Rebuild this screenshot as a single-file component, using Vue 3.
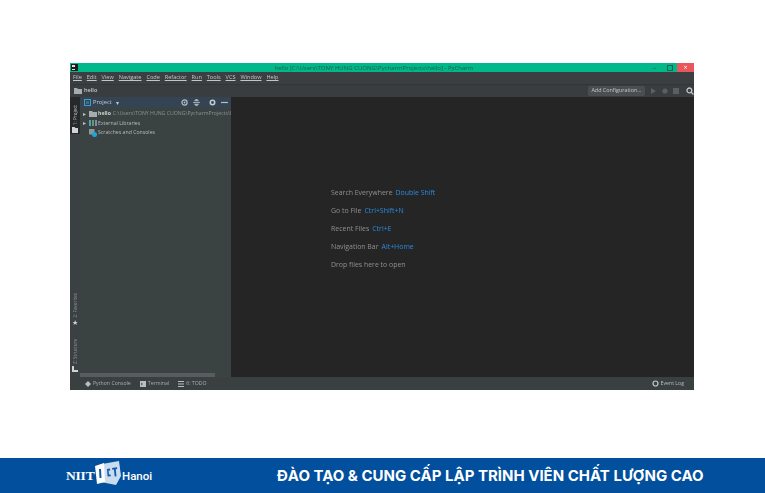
<script setup>
const menus = ['File','Edit','View','Navigate','Code','Refactor','Run','Tools','VCS','Window','Help']
const hints = [
  { label: 'Search Everywhere', key: 'Double Shift' },
  { label: 'Go to File', key: 'Ctrl+Shift+N' },
  { label: 'Recent Files', key: 'Ctrl+E' },
  { label: 'Navigation Bar', key: 'Alt+Home' },
  { label: 'Drop files here to open', key: '' },
]
</script>

<template>
  <div class="page">
    <div class="window">
      <div class="titlebar">
        <svg class="app-ico" width="7" height="7" viewBox="0 0 7 7"><rect width="7" height="7" fill="#1c1c1c"/><rect x="1" y="1" width="3" height="2" fill="#ddd"/><rect x="1" y="5" width="3" height="1" fill="#ddd"/></svg>
        <span class="title">hello [C:\Users\TONY HUNG CUONG\PycharmProjects\hello] - PyCharm</span>
        <div class="winbtns">
          <span class="wb">–</span>
          <span class="wb"><svg width="6" height="6" viewBox="0 0 6 6"><rect x="0.5" y="0.5" width="5" height="5" fill="none" stroke="#2c5a50"/></svg></span>
          <span class="wb close">×</span>
        </div>
      </div>
      <div class="menubar">
        <span v-for="m in menus" :key="m" class="menu">{{ m }}</span>
      </div>
      <div class="navbar">
        <svg width="8" height="6" viewBox="0 0 8 6"><path d="M0 0h3l1 1h4v5H0z" fill="#a4acb2"/></svg>
        <span class="crumb">hello</span>
        <div class="spacer"></div>
        <span class="config">Add Configuration...</span>
        <svg class="tool" width="6" height="6" viewBox="0 0 6 6"><path d="M1 0l5 3-5 3z" fill="#5a5f60"/></svg>
        <svg class="tool" width="6" height="6" viewBox="0 0 6 6"><circle cx="3" cy="3" r="2.6" fill="#5a5f60"/></svg>
        <svg class="tool" width="6" height="6" viewBox="0 0 6 6"><rect width="6" height="6" fill="#5a5f60"/></svg>
        <svg class="search" width="8" height="8" viewBox="0 0 8 8"><circle cx="3.4" cy="3.4" r="2.4" fill="none" stroke="#c4c8ca" stroke-width="1.3"/><path d="M5 5l2.500 2.500" stroke="#c4c8ca" stroke-width="1.3"/></svg>
      </div>
      <div class="main">
        <div class="rail">
          <div class="rail-top">
            <div class="railtab active">
              <span class="vert">1: Project</span>
              <svg width="6" height="6" viewBox="0 0 6 6"><path d="M0 0h2.500l1 1H6v5H0z" fill="#cfd3d5"/></svg>
            </div>
          </div>
          <div class="rail-bottom">
            <div class="railtab">
              <span class="vert dim">2: Favorites</span>
              <span class="star">★</span>
            </div>
            <div class="railtab">
              <span class="vert dim">Z: Structure</span>
              <svg width="6" height="6" viewBox="0 0 6 6"><path d="M0 0h2v4h4v2H0z" fill="#cfd3d5"/></svg>
            </div>
          </div>
        </div>
        <div class="project">
          <div class="phead">
            <svg width="7" height="7" viewBox="0 0 7 7"><rect x="0.5" y="0.5" width="6" height="6" fill="none" stroke="#3aa0c8"/><rect x="2" y="2" width="3" height="3" fill="#2f6f90"/></svg>
            <span class="ptitle">Project</span>
            <span class="caret">▾</span>
            <div class="spacer"></div>
            <svg width="7" height="7" viewBox="0 0 7 7"><circle cx="3.5" cy="3.5" r="2.6" fill="none" stroke="#b5bcc2" stroke-width="1.2"/><circle cx="3.5" cy="3.5" r="0.9" fill="#b5bcc2"/></svg>
            <svg class="ml" width="7" height="7" viewBox="0 0 7 7"><path d="M0 3.500h7M3.500 0l-2 1.800h4zM3.500 7l-2-1.800h4z" stroke="#b5bcc2" stroke-width=".8" fill="#b5bcc2"/></svg>
            <svg class="ml2" width="7" height="7" viewBox="0 0 7 7"><circle cx="3.5" cy="3.5" r="2.2" fill="none" stroke="#c4c9cd" stroke-width="1.6"/></svg>
            <svg class="ml" width="7" height="7" viewBox="0 0 7 7"><path d="M0 3.500h7" stroke="#b5bcc2" stroke-width="1.2"/></svg>
          </div>
          <div class="tree">
            <div class="row">
              <span class="arrow">▸</span>
              <svg width="8" height="6" viewBox="0 0 8 6"><path d="M0 0h3l1 1h4v5H0z" fill="#a4acb2"/></svg>
              <span class="bold">hello</span>
              <span class="path">C:\Users\TONY HUNG CUONG\PycharmProjects\hello</span>
            </div>
            <div class="row">
              <span class="arrow">▸</span>
              <svg width="8" height="6" viewBox="0 0 8 6"><rect width="2" height="6" fill="#4f9fc0"/><rect x="3" width="2" height="6" fill="#5aa06a"/><rect x="6" width="2" height="6" fill="#8d7fb5"/></svg>
              <span class="item">External Libraries</span>
            </div>
            <div class="row sub">
              <svg width="8" height="8" viewBox="0 0 8 8"><rect width="5.500" height="5.500" fill="#8d969b"/><circle cx="5.500" cy="5.500" r="2.500" fill="#19a7d8"/></svg>
              <span class="item">Scratches and Consoles</span>
            </div>
          </div>
          <div class="spacer"></div>
          <div class="scroll"></div>
        </div>
        <div class="editor">
          <div v-for="h in hints" :key="h.label" class="hint">
            <span class="hlabel">{{ h.label }}</span>
            <span v-if="h.key" class="hkey">{{ h.key }}</span>
          </div>
        </div>
      </div>
      <div class="status">
        <span class="sitem first"><svg width="6" height="6" viewBox="0 0 6 6"><path d="M3 0l3 3-3 3-3-3z" fill="#b8bec2"/></svg>Python Console</span>
        <span class="sitem"><svg width="6" height="6" viewBox="0 0 6 6"><rect width="6" height="6" fill="#b8bec2"/><path d="M1 2l1.500 1L1 4" stroke="#333" fill="none" stroke-width=".7"/></svg>Terminal</span>
        <span class="sitem"><svg width="6" height="6" viewBox="0 0 6 6"><path d="M0 .5h6M0 3h6M0 5.500h6" stroke="#b8bec2"/></svg>6: TODO</span>
        <div class="spacer"></div>
        <span class="sitem log"><svg width="7" height="7" viewBox="0 0 7 7"><circle cx="3.5" cy="3.5" r="2.5" fill="none" stroke="#c4c9cd" stroke-width="1.2"/></svg>Event Log</span>
      </div>
    </div>
    <div class="footer">
      <div class="logo">
        <span class="niit">NIIT</span>
        <svg class="ict" width="26" height="25" viewBox="0 0 26 25">
          <path d="M7 3L24 0l2 15-5 9-15-3z" fill="#c9dcf0"/>
          <path d="M0 5l9-3 1 19-8 2z" fill="#fff"/>
          <path d="M4 8h2l.5 9h-2z" fill="#0f5aa6"/>
          <path d="M12 8l3-.4.2 1.800-1.600.2.4 4 1.600-.2.200 1.800-3.200.4z" fill="#0f5aa6"/>
          <path d="M17 7l5-.7.200 1.800-1.500.2.800 7-1.800.3-.8-7-1.500.2z" fill="#0f5aa6"/>
        </svg>
        <span class="hanoi">Hanoi</span>
      </div>
      <span class="slogan">ĐÀO TẠO &amp; CUNG CẤP LẬP TRÌNH VIÊN CHẤT LƯỢNG CAO</span>
    </div>
  </div>
</template>

<style scoped>
.page {
  width: 765px;
  height: 493px;
  background: #fff;
  overflow: hidden;
  display: flex;
  flex-direction: column;
  font-family: "Open Sans", "Noto Sans", sans-serif;
}
.spacer { flex: 1; }
.window {
  margin: 63px 0 0 70px;
  width: 624px;
  height: 327px;
  display: flex;
  flex-direction: column;
  background: #3c3f41;
  color: #b6babc;
  font-size: 5.6px;
  line-height: 1;
  filter: blur(.3px);
}
.titlebar {
  height: 9px;
  background: #00b98a;
  display: flex;
  align-items: center;
  position: relative;
  color: #1d5a4a;
}
.app-ico { margin-left: 1px; }
.title {
  position: absolute;
  left: 0;
  right: 16px;
  text-align: center;
  font-size: 6px;
}
.winbtns { margin-left: auto; display: flex; height: 100%; position: relative; }
.wb { width: 15px; display: flex; align-items: center; justify-content: center; color: #2c5a50; font-size: 7px; }
.wb.close { background: #e8575a; color: #fff; width: 17px; }
.menubar {
  height: 12px;
  background: #3c3f41;
  display: flex;
  align-items: center;
  gap: 4.9px;
  padding-left: 3px;
  color: #c2c6c8;
}
.menu { text-decoration: underline; text-decoration-thickness: .5px; }
.navbar {
  height: 13px;
  background: #3a3d3e;
  border-top: 1px solid #333637;
  box-sizing: border-box;
  display: flex;
  align-items: center;
  padding-left: 4px;
  gap: 2px;
  color: #c4c8ca;
}
.crumb { font-weight: 600; }
.config {
  background: #4a4e50;
  border-radius: 2px;
  padding: 2.5px 3px;
  color: #c4c8ca;
  font-size: 5.4px;
}
.tool { margin-left: 3.5px; }
.search { margin-left: 5px; }
.main {
  flex: 1;
  display: flex;
  min-height: 0;
  background: #252526;
}
.rail {
  width: 10px;
  background: #3b4042;
  display: flex;
  flex-direction: column;
  justify-content: space-between;
  flex: none;
}
.rail-top .railtab.active { background: #26282a; height: 36px; }
.rail-bottom { display: flex; flex-direction: column; gap: 12px; padding-bottom: 4px; }
.railtab {
  display: flex;
  flex-direction: column;
  align-items: center;
  justify-content: flex-end;
  gap: 2px;
  padding-bottom: 1px;
}
.vert {
  writing-mode: vertical-rl;
  transform: rotate(180deg);
  font-size: 4.6px;
  color: #c6cacc;
}
.vert.dim { color: #8f9597; }
.star { color: #cfd3d5; font-size: 7px; }
.project {
  width: 151px;
  flex: none;
  background: #3a4342;
  display: flex;
  flex-direction: column;
  overflow: hidden;
}
.phead {
  height: 11px;
  background: #344453;
  display: flex;
  align-items: center;
  padding: 0 3px 0 4px;
  color: #c2c8cd;
  flex: none;
}
.ptitle { margin-left: 2px; font-size: 5.8px; }
.caret { margin-left: 4px; font-size: 6px; }
.ml { margin-left: 5px; }
.ml2 { margin-left: 9px; }
.tree { padding-top: 1px; }
.row {
  height: 9.5px;
  display: flex;
  align-items: center;
  padding-left: 2px;
  gap: 1px;
  white-space: nowrap;
  color: #b7bcbe;
  font-size: 5.2px;
}
.row > * { flex: none; }
.row.sub { padding-left: 9px; }
.arrow { width: 5px; font-size: 6px; color: #bcc0c2; margin-left: 1px; }
.bold { font-weight: 700; color: #d0d3d5; }
.path { color: #8b9092; margin-left: 1px; }
.scroll {
  height: 4px;
  width: 135px;
  background: #595c5e;
  flex: none;
}
.editor {
  flex: 1;
  display: flex;
  flex-direction: column;
  padding: 91px 0 0 100px;
  gap: 9px;
  font-size: 6.95px;
  line-height: 9px;
}
.hint { display: flex; gap: 3px; }
.hlabel { color: #909090; }
.hkey { color: #2b8ae0; }
.status {
  height: 13px;
  background: #3a3f40;
  display: flex;
  align-items: center;
  padding-left: 15px;
  gap: 9px;
  color: #a8adaf;
  font-size: 5.2px;
}
.sitem { display: flex; align-items: center; gap: 2px; }
.log { margin-right: 10px; color: #b8bcbe; }
.footer {
  margin-top: 68px;
  height: 35px;
  background: #014f9d;
  display: flex;
  align-items: center;
  color: #fff;
}
.logo { display: flex; align-items: center; margin-left: 66px; width: 211px; }
.niit { font-family: "Liberation Serif", serif; font-weight: 700; font-size: 13.5px; letter-spacing: -.2px; width: 29px; }
.ict { flex: none; margin-top: -4px; }
.hanoi { font-family: "Roboto", sans-serif; font-weight: 500; font-size: 11.5px; margin-left: 1px; }
.slogan {
  font-family: "Inter", "Noto Sans", sans-serif;
  font-weight: 700;
  font-size: 15px;
  white-space: nowrap;
}
</style>
